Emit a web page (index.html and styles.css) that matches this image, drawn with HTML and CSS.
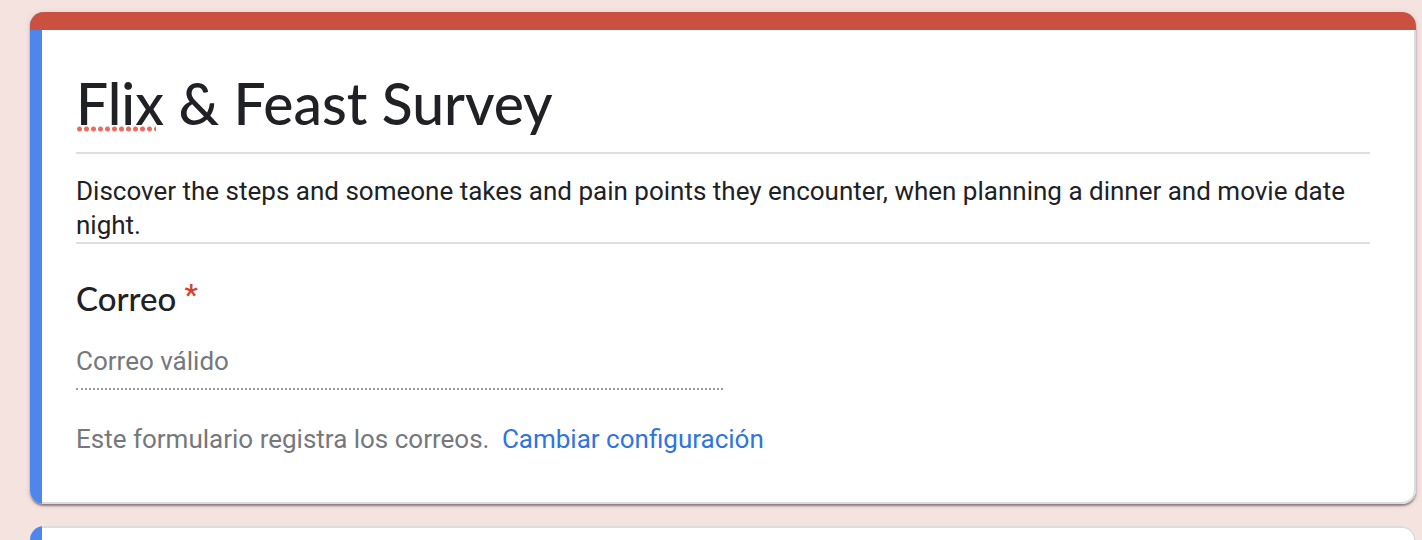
FILE: index.html
```html
<!DOCTYPE html>
<html lang="es">
<head>
<meta charset="utf-8">
<meta name="viewport" content="width=device-width, initial-scale=1">
<title>Flix &amp; Feast Survey</title>
<link rel="stylesheet" href="styles.css">
</head>
<body>
<main class="page">
  <form class="card">
    <div class="card-accent"></div>
    <div class="card-body">
      <h1 class="title"><span class="misspelled">Flix</span> &amp; Feast Survey</h1>
      <textarea class="description" rows="2" aria-label="Descripción del formulario" spellcheck="false">Discover the steps and someone takes and pain points they encounter, when planning a dinner and movie date night.</textarea>
      <label class="question" for="email">Correo <span class="required">*</span></label>
      <input class="email" id="email" type="email" placeholder="Correo válido">
      <p class="notice">Este formulario registra los correos. <a class="settings-link" href="#">Cambiar configuración</a></p>
    </div>
  </form>
  <section class="card card-next"></section>
</main>
</body>
</html>
```
FILE: styles.css
```css
* {
  box-sizing: border-box;
}

body {
  margin: 0;
  background: #f5e3e0;
  color: #202124;
  font-family: Roboto, "Liberation Sans", sans-serif;
  font-size: 26px;
}

.page {
  display: flex;
  flex-direction: column;
  gap: 22px;
  min-height: 100vh;
  padding: 12px 6px 0 30px;
}

.card {
  position: relative;
  overflow: hidden;
  background: #fff;
  border-radius: 14px;
}

form.card {
  box-shadow: 0 2px 2px rgba(60, 40, 40, 0.5), 0 1px 6px rgba(60, 40, 40, 0.12);
}

/* Thin outline around the card */
.card::after {
  content: "";
  position: absolute;
  inset: 0;
  border: 2px solid #dadce0;
  border-radius: inherit;
  pointer-events: none;
}

/* Selection stripe on the left edge */
.card::before {
  content: "";
  position: absolute;
  z-index: 1;
  top: 0;
  bottom: 0;
  left: 0;
  width: 12px;
  background: #4f86ec;
}

.card-accent {
  position: relative;
  z-index: 2;
  height: 18px;
  background: #ca5040;
}

.card-body {
  display: flex;
  flex-direction: column;
  padding: 38px 46px 48px 46px;
}

.title {
  margin: 0;
  padding-bottom: 14px;
  border-bottom: 2px solid #dfdfdf;
  font-family: Lato, "Open Sans", sans-serif;
  font-size: 57px;
  font-weight: 500;
  line-height: 70px;
}

.misspelled {
  position: relative;
}

.misspelled::after {
  content: "";
  position: absolute;
  left: 0;
  right: 8px;
  bottom: 5px;
  height: 6px;
  background: radial-gradient(circle, #ec6a5e 2px, transparent 3px) 0 0 / 7px 6px repeat-x;
}

.description {
  display: block;
  width: 100%;
  margin: 0;
  padding: 20px 0 0;
  border: 0;
  border-bottom: 2px solid #dfdfdf;
  background: none;
  color: inherit;
  font: inherit;
  line-height: 34px;
  outline: 0;
  overflow: hidden;
  resize: none;
}

.question {
  margin-top: 34px;
  font-family: Lato, "Open Sans", sans-serif;
  font-size: 33px;
  font-weight: 500;
  line-height: 40px;
}

.required {
  color: #d23f31;
  font-family: Roboto, sans-serif;
  font-size: 30px;
  line-height: 1;
  vertical-align: 6px;
}

.email {
  width: 50%;
  height: 56px;
  margin-top: 16px;
  padding: 0;
  border: 0;
  border-bottom: 2px dotted #9a9a9a;
  background: none;
  color: inherit;
  font: inherit;
  outline: 0;
}

.email::placeholder {
  color: #75787c;
  opacity: 1;
}

.notice {
  margin: 32px 0 0;
  color: #75787c;
  line-height: 34px;
}

.settings-link {
  margin-left: 6px;
  color: #2f74e0;
  text-decoration: none;
}

.card-next {
  flex: 1;
  border-radius: 14px 14px 0 0;
}

.card-next::after {
  border-bottom: 0;
}
```
